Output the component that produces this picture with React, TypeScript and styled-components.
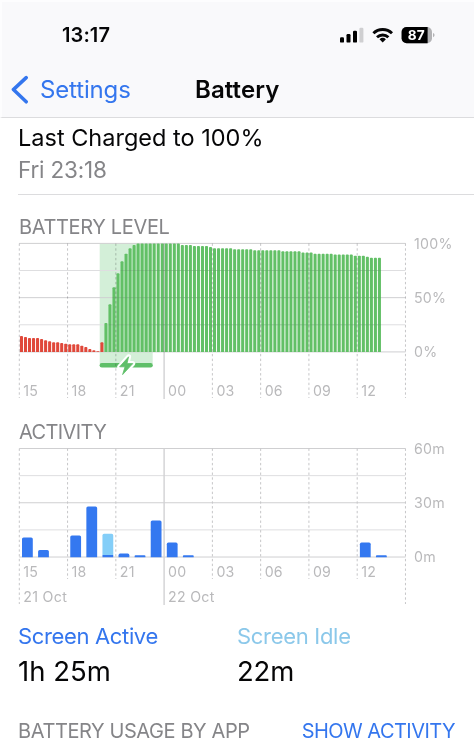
import React from "react";
import styled, { createGlobalStyle } from "styled-components";

const Global = createGlobalStyle`
  * { box-sizing: border-box; }
  body { margin: 0; background: #fff; }
`;

const Screen = styled.main`
  width: 474px;
  height: 740px;
  overflow: hidden;
  background: #fff;
  color: #060607;
  font-family: Inter, "Liberation Sans", sans-serif;
  display: flex;
  flex-direction: column;
`;

const Header = styled.header`
  height: 118px;
  flex: none;
  background: #f9f9fb;
  border-bottom: 1px solid #dcdcde;
  border-top: 2px solid #fdfdfe;
  border-left: 2px solid #fdfdfe;
`;

const StatusBar = styled.div`
  display: flex;
  justify-content: space-between;
  align-items: center;
  height: 24px;
  margin: 21px 39px 0 60px;
`;

const Tray = styled.div`
  display: flex;
  align-items: center;
  gap: 7px;
`;

const Nav = styled.nav`
  display: grid;
  grid-template-columns: 193px 1fr;
  align-items: center;
  height: 30px;
  margin-top: 28px;
`;

const Back = styled.div`
  display: flex;
  align-items: center;
  padding-left: 9px;
  gap: 11px;
`;

interface TextProps {
  $size: number;
  $line: number;
  $color?: string;
  $weight?: number;
  $track?: number;
}

const Text = styled.span<TextProps>`
  display: block;
  white-space: nowrap;
  font-size: ${(p) => p.$size}px;
  line-height: ${(p) => p.$line}px;
  color: ${(p) => p.$color ?? "inherit"};
  font-weight: ${(p) => p.$weight ?? 400};
  letter-spacing: ${(p) => p.$track ?? 0}px;
`;

const Charged = styled.section`
  height: 77px;
  flex: none;
  margin-left: 18px;
  padding-top: 4px;
  border-bottom: 1px solid #dcdcde;
`;

const ChartSection = styled.section<{ $height: number; $top: number }>`
  height: ${(p) => p.$height}px;
  flex: none;
  padding-top: ${(p) => p.$top}px;
  h2 {
    margin: 0 0 0 19px;
    height: ${(p) => 43 - p.$top}px;
  }
`;

const Plot = styled.svg`
  display: block;
  overflow: visible;
  font-size: 14.2px;
  fill: #b9b9bb;
`;

const LevelGuides = styled.g`
  mix-blend-mode: multiply;
`;

const Totals = styled.section`
  display: grid;
  grid-template-columns: 219px 1fr;
  height: 101px;
  flex: none;
  padding: 1px 0 0 18px;
`;

const Footer = styled.footer`
  display: flex;
  justify-content: space-between;
  padding: 0 19px 0 18px;
`;

const GRAY = "#858588";
const BLUE = "#3476ee";
const LEFT = 19.3;
const STEP = 48.27;
const HOURS = ["15", "18", "21", "00", "03", "06", "09", "12"];

const run = (count: number, level: number): number[] => Array(count).fill(level);

const LEVELS = [
  16, 15, 14, 14, 14, 13, 11.7, 10.7, 9.7, 9.7, 9, 8.3, 7.7, 7.7, 7.7, 6.3, 5, 3, 1.8, 0.8, 9.7,
  29, 47.7, 64.7, 78.7, 90.7, 98.3, 103.7, 107,
  ...run(11, 108.4),
  ...run(3, 107),
  ...run(4, 106),
  105,
  ...run(5, 103.8),
  ...run(5, 102.8),
  ...run(7, 101.8),
  ...run(5, 100.7),
  ...run(3, 99.5),
  ...run(5, 98.2),
  ...run(5, 97.4),
  ...run(3, 96.3),
  95.2,
  ...run(3, 94.2),
];

const USAGE: { hour: number; active: number; idle?: number }[] = [
  { hour: 0, active: 19.6 },
  { hour: 1, active: 7 },
  { hour: 3, active: 21.6 },
  { hour: 4, active: 50.6 },
  { hour: 5, active: 2, idle: 21.2 },
  { hour: 6, active: 3.4 },
  { hour: 7, active: 1.8 },
  { hour: 8, active: 36.6 },
  { hour: 9, active: 14.4 },
  { hour: 10, active: 1.8 },
  { hour: 21, active: 14.4 },
  { hour: 22, active: 1.8 },
];

const roundedTop = (x: number, top: number, w: number, base: number, r: number) =>
  `M${x} ${base}V${top + r}Q${x} ${top} ${x + r} ${top}H${x + w - r}Q${x + w} ${top} ${x + w} ${top + r}V${base}Z`;

const Rows = ({ top }: { top: number }) => (
  <g>
    {[0, 1, 2, 3, 4].map((i) => (
      <path
        key={i}
        d={`M${LEFT} ${top + i * 27.13}H405.5`}
        stroke={i % 2 ? "#dedee0" : "#cfcfd1"}
        strokeWidth="1"
      />
    ))}
  </g>
);

const Columns = ({ top, ends }: { top: number; ends: number[] }) => (
  <g>
    {ends.map((end, i) => (
      <path
        key={i}
        d={`M${LEFT + i * STEP} ${top}V${end}`}
        stroke={i === 3 ? "#d2d2d4" : "#c6c6c8"}
        strokeWidth={i === 3 ? 1.4 : 1}
        strokeDasharray={i === 3 ? undefined : "2.4 2.4"}
      />
    ))}
  </g>
);

const HourLabels = ({ y }: { y: number }) => (
  <g letterSpacing="0.2">
    {HOURS.map((h, i) => (
      <text key={h} x={LEFT + 4 + i * STEP} y={y}>
        {h}
      </text>
    ))}
  </g>
);

const Scale = ({ top, labels }: { top: number; labels: string[] }) => (
  <g letterSpacing="0.25">
    {labels.map((l, i) => (
      <text key={l} x="414" y={top + 5.3 + i * 54.25}>
        {l}
      </text>
    ))}
  </g>
);

const BOLT = "M128.6 356.8L119.6 366.8H125L122.6 374.6L132.8 363.6H127Z";

const LevelChart = () => (
  <Plot width="474" height="164" viewBox="0 238 474 164">
    <rect x="99.7" y="243.5" width="53" height="121" fill="#d3efd8" />
    <Rows top={243.4} />
    {LEVELS.map((h, i) => (
      <path
        key={i}
        d={roundedTop(19.95 + i * 4.022, 352 - h, 3.05, 352, Math.min(0.9, h / 2))}
        fill={i < 21 ? "#e0483a" : "#62c066"}
      />
    ))}
    <path
      d="M120.5 270.5H381M112.5 297.7H381M108.5 324.8H381"
      stroke="#4a8a55"
      strokeWidth="1"
      opacity="0.2"
    />
    <path d="M101.8 365.2H150.6" stroke="#5fbf69" strokeWidth="4.4" strokeLinecap="round" />
    <LevelGuides>
      <Columns top={243.5} ends={[398, 398, 398, 399, 398, 398, 398, 398, 398]} />
    </LevelGuides>
    <path d={BOLT} fill="#fff" stroke="#fff" strokeWidth="5" strokeLinejoin="round" />
    <path d={BOLT} fill="#5fbf69" stroke="#5fbf69" strokeWidth="0.8" strokeLinejoin="round" />
    <HourLabels y={395.8} />
    <Scale top={243.4} labels={["100%", "50%", "0%"]} />
  </Plot>
);

const ActivityChart = () => (
  <Plot width="474" height="164" viewBox="0 444 474 164">
    <Rows top={448.5} />
    <Columns top={448.5} ends={[604, 579, 579, 605, 579, 579, 579, 579, 604]} />
    {USAGE.map(({ hour, active, idle }) => {
      const x = 22 + hour * 16.09;
      return (
        <g key={hour}>
          {idle && <path d={roundedTop(x, 557 - active - idle, 10.8, 557 - active, 1.6)} fill="#84cef8" />}
          <path
            d={roundedTop(x, 557 - active, 10.8, 557.2, idle ? 0 : Math.min(1.6, active / 2))}
            fill="#3478f0"
          />
        </g>
      );
    })}
    <HourLabels y={577} />
    <Scale top={448.5} labels={["60m", "30m", "0m"]} />
    <g letterSpacing="0.3">
      <text x="23.3" y="601.5">21 Oct</text>
      <text x="168" y="601.5">22 Oct</text>
    </g>
  </Plot>
);

const Signal = () => (
  <svg width="26" height="18" viewBox="339 26 26 18">
    <rect x="340" y="37.2" width="4" height="5.4" rx="1.2" />
    <rect x="346.5" y="34" width="4" height="8.6" rx="1.2" />
    <rect x="353" y="30.8" width="4" height="11.8" rx="1.2" />
    <rect x="359.4" y="27.8" width="4" height="14.8" rx="1.2" fill="#cfcfd1" />
  </svg>
);

const Wifi = () => (
  <svg width="22" height="18" viewBox="372 26 22 18" fill="none" stroke="#060607" strokeWidth="2.9">
    <path d="M373.4 33.2A13.4 13.4 0 0 1 392 33.2" />
    <path d="M377 37.2A8.4 8.4 0 0 1 388.4 37.2" />
    <path d="M382.7 42.6L379.5 39.3A4.7 4.7 0 0 1 385.9 39.3Z" fill="#060607" stroke="none" />
  </svg>
);

const BatteryIcon = () => (
  <svg width="34" height="18" viewBox="401 26 34 18">
    <rect x="401.6" y="27" width="30.4" height="16.2" rx="5" fill="#b3b3b5" />
    <path d="M406.6 27H427.6V43.2H406.6A5 5 0 0 1 401.6 38.2V32A5 5 0 0 1 406.6 27Z" />
    <path d="M433 33Q434.6 33.6 434.6 35.1T433 37.2Z" fill="#b3b3b5" />
    <text x="416.2" y="40" fontSize="13.6" fontWeight="700" textAnchor="middle" fill="#fff">87</text>
  </svg>
);

export default function App() {
  return (
    <Screen>
      <Global />
      <Header>
        <StatusBar>
          <Text $size={20} $line={24} $weight={600} $track={0.1}>13:17</Text>
          <Tray>
            <Signal />
            <Wifi />
            <BatteryIcon />
          </Tray>
        </StatusBar>
        <Nav>
          <Back>
            <svg width="18" height="30" viewBox="11 75 18 30" fill="none" stroke={BLUE} strokeWidth="3.5" strokeLinecap="round" strokeLinejoin="round">
              <path d="M26.2 77.6L13.4 89.6L26.2 101.8" />
            </svg>
            <Text $size={24} $line={30} $color={BLUE} $track={-0.15}>Settings</Text>
          </Back>
          <Text $size={24} $line={30} $weight={600} $track={0.1}>Battery</Text>
        </Nav>
      </Header>
      <Charged>
        <Text $size={23.5} $line={32}>Last Charged to 100%</Text>
        <Text $size={22.5} $line={32} $color={GRAY} $track={-0.2}>Fri 23:18</Text>
      </Charged>
      <ChartSection $top={20} $height={206}>
        <h2><Text $size={20} $line={24} $color={GRAY} $track={-0.35}>BATTERY LEVEL</Text></h2>
        <LevelChart />
      </ChartSection>
      <ChartSection $top={19} $height={220}>
        <h2><Text $size={20} $line={24} $color={GRAY} $track={-0.6}>ACTIVITY</Text></h2>
        <ActivityChart />
      </ChartSection>
      <Totals>
        <div>
          <Text $size={22} $line={29} $color={BLUE} $track={-0.35}>Screen Active</Text>
          <Text $size={27.5} $line={40}>1h 25m</Text>
        </div>
        <div>
          <Text $size={22} $line={29} $color="#8bc8ea" $track={-0.3}>Screen Idle</Text>
          <Text $size={27.5} $line={40} $track={-0.2}>22m</Text>
        </div>
      </Totals>
      <Footer>
        <Text $size={20} $line={18} $color={GRAY} $track={-0.4}>BATTERY USAGE BY APP</Text>
        <Text $size={20} $line={18} $color={BLUE} $track={-0.55}>SHOW ACTIVITY</Text>
      </Footer>
    </Screen>
  );
}
